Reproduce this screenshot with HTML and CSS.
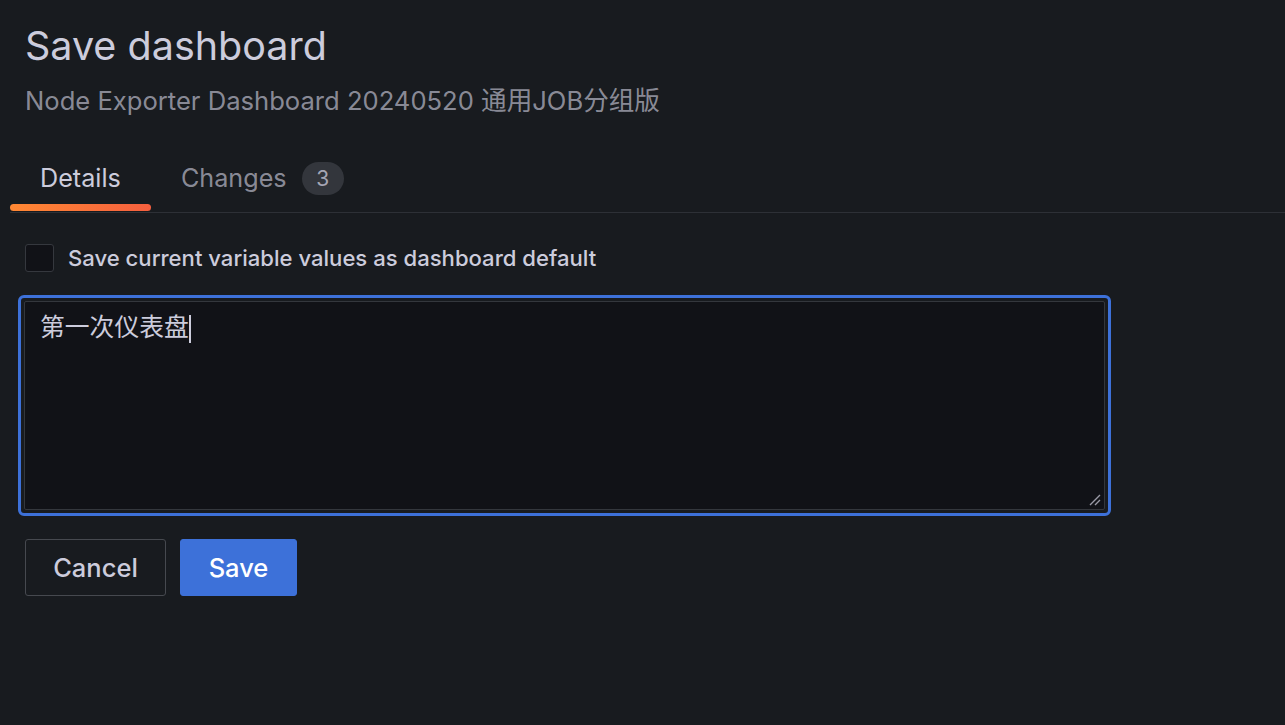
FILE: index.html
```html
<!DOCTYPE html>
<html lang="zh">
<head>
<meta charset="utf-8">
<title>Save dashboard</title>
<link rel="stylesheet" href="styles.css">
</head>
<body>
<div class="page">
  <header class="header">
    <h1 class="title">Save dashboard</h1>
    <div class="subtitle">Node Exporter Dashboard 20240520 通用JOB分组版</div>
  </header>
  <nav class="tabs">
    <div class="tab tab-active">Details</div>
    <div class="tab">Changes <span class="badge">3</span></div>
  </nav>
  <div class="body">
    <label class="check-row">
      <span class="checkbox"></span>
      <span class="check-label">Save current variable values as dashboard default</span>
    </label>
    <div class="textarea-wrap">
      <div class="textarea">第一次仪表盘<span class="caret"></span>
        <svg class="resize" width="12" height="12" viewBox="0 0 12 12"><path d="M1 11 L11 1 M6 11 L11 6" stroke="#9a9aa6" stroke-width="1.4" fill="none"/></svg>
      </div>
    </div>
    <div class="actions">
      <button class="btn btn-secondary">Cancel</button>
      <button class="btn btn-primary">Save</button>
    </div>
  </div>
</div>
</body>
</html>
```

FILE: styles.css
```css
* { box-sizing: border-box; }
html, body { margin: 0; padding: 0; background: #181b1f; }
body {
  font-family: Inter, "Noto Sans CJK SC", sans-serif;
  color: #ccccdc;
  width: 1285px;
  height: 725px;
  overflow: hidden;
}
.page { padding: 0; }
.header { padding: 22px 25px 0 25px; }
.title {
  margin: 0;
  font-size: 39.5px;
  font-weight: 400;
  line-height: 48px;
  color: #ccccdc;
}
.subtitle {
  margin-top: 15px;
  font-size: 25.6px;
  line-height: 32px;
  color: rgba(204, 204, 220, 0.65);
}
.tabs {
  display: flex;
  margin-top: 33px;
  margin-left: 10px;
  border-bottom: 1px solid #2d3036;
  height: 63px;
}
.tab {
  position: relative;
  display: flex;
  align-items: center;
  padding: 2px 30px 0 30px;
  height: 54px;
  font-size: 25.2px;
  color: rgba(204, 204, 220, 0.65);
}
.tab-active { color: #ccccdc; }
.tab-active::after {
  content: "";
  position: absolute;
  left: 0; right: 0; bottom: -7px;
  height: 7px;
  border-radius: 4px;
  background: linear-gradient(90deg, #ff8833, #f55f3e);
}
.badge {
  display: inline-flex;
  align-items: center;
  justify-content: center;
  margin-left: 15px;
  width: 42px;
  height: 33px;
  border-radius: 17px;
  background: #33363c;
  font-size: 21px;
  color: rgba(204, 204, 220, 0.75);
}
.body { padding: 31px 25px 0 25px; }
.check-row { display: flex; align-items: center; gap: 14px; }
.checkbox {
  width: 29px; height: 28px;
  border: 1px solid #35383e;
  border-radius: 3px;
  background: #111217;
}
.check-label { font-size: 22.1px; font-weight: 500; color: #ccccdc; }
.textarea-wrap {
  margin-top: 23px;
  margin-left: -7px;
  width: 1093px;
  height: 221px;
  border: 3px solid #3d71d9;
  border-radius: 6px;
  padding: 3px;
}
.textarea {
  position: relative;
  height: 100%;
  background: #111217;
  border: 1px solid #34373d;
  border-radius: 2px;
  padding: 9px 15px;
  font-size: 24.8px;
  line-height: 32px;
  color: #ccccdc;
}
.caret {
  display: inline-block;
  width: 2px; height: 28px;
  background: #ccccdc;
  vertical-align: middle;
  margin-left: 0;
}
.resize { position: absolute; right: 3px; bottom: 3px; }
.actions { display: flex; gap: 14px; margin-top: 23px; }
.btn {
  font-family: Inter, sans-serif;
  height: 57px;
  padding: 0;
  border-radius: 3px;
  font-size: 25.5px;
  font-weight: 500;
  cursor: pointer;
}
.btn-secondary {
  background: transparent;
  border: 1px solid #46494f;
  color: #ccccdc;
  width: 141px;
}
.btn-primary {
  background: #3d71d9;
  border: 1px solid #3d71d9;
  color: #ffffff;
  width: 117px;
}
```
